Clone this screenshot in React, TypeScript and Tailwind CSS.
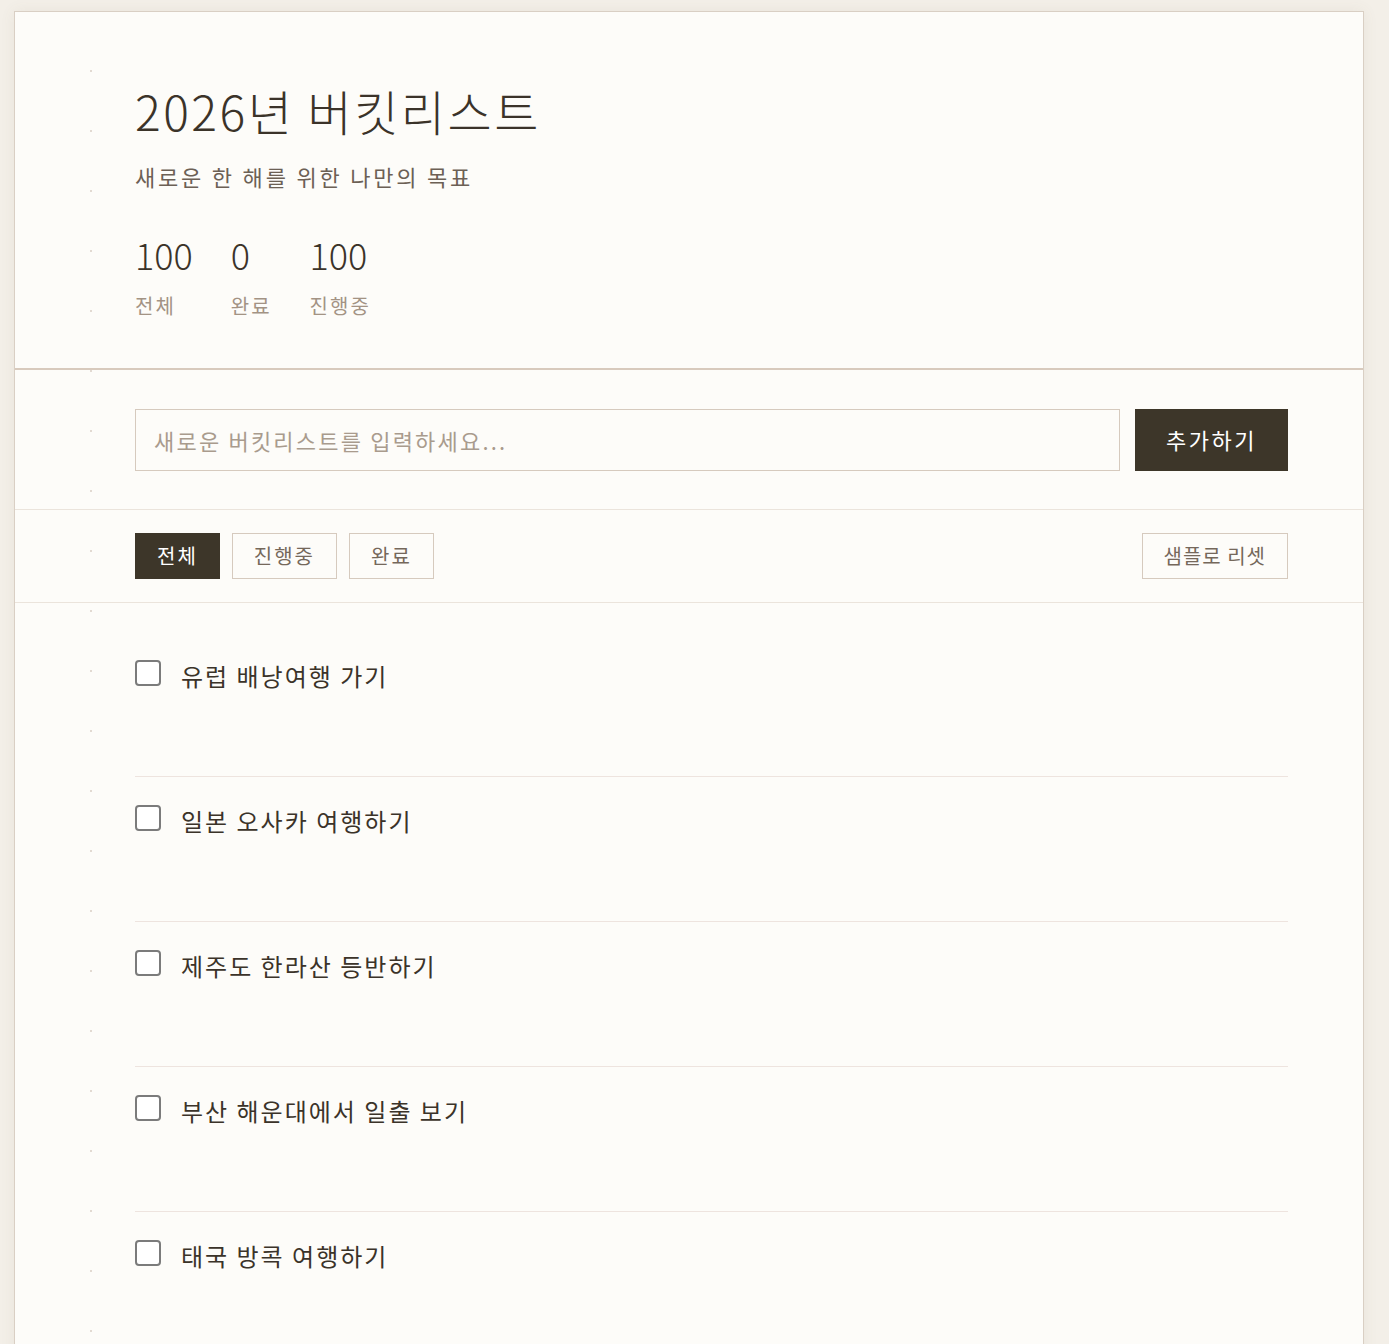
import { useState } from 'react';

type Item = {
	id: number;
	text: string;
	done: boolean;
};

const SAMPLE: Item[] = [
	'유럽 배낭여행 가기',
	'일본 오사카 여행하기',
	'제주도 한라산 등반하기',
	'부산 해운대에서 일출 보기',
	'태국 방콕 여행하기',
	'스카이다이빙 도전하기',
	'마라톤 완주하기',
].map((text, i) => ({ id: i + 1, text, done: false }));

type Filter = 'all' | 'active' | 'done';

const FILTERS: { key: Filter; label: string }[] = [
	{ key: 'all', label: '전체' },
	{ key: 'active', label: '진행중' },
	{ key: 'done', label: '완료' },
];

const App = () => {
	const [items, setItems] = useState<Item[]>(SAMPLE);
	const [filter, setFilter] = useState<Filter>('all');
	const [draft, setDraft] = useState('');

	const total = 100;
	const doneCount = items.filter((item) => item.done).length;

	const visible = items.filter((item) =>
		filter === 'all' ? true : filter === 'done' ? item.done : !item.done,
	);

	const addItem = () => {
		if (!draft.trim()) return;
		setItems([...items, { id: Date.now(), text: draft.trim(), done: false }]);
		setDraft('');
	};

	return (
		<div className="min-h-screen bg-[#f3efe8] pl-[14px] pt-[11px] font-['Noto_Sans_CJK_KR','Noto_Sans',sans-serif] text-[#3b3329]">
			<div className="relative w-[1350px] border border-[#d9cfc4] bg-[#fdfcf9] shadow-[0_0_14px_rgba(120,100,80,0.08)]">
				{/* notebook margin dots */}
				<div className="pointer-events-none absolute top-0 bottom-0 left-[75px] w-[2px] bg-[linear-gradient(#e2dad2_2px,transparent_2px)] bg-[length:2px_60px] bg-[position:0_58px]" />

				<header className="border-b-2 border-[#d8cabd] pt-[70px] pr-[75px] pb-[49px] pl-[120px]">
					<h1 className="text-[48px] leading-[1.2] font-light tracking-[2.5px]">2026년 버킷리스트</h1>
					<p className="mt-5 text-[22px] leading-[1.5] tracking-[2.8px] text-[#6c6055]">
						새로운 한 해를 위한 나만의 목표
					</p>
					<div className="mt-10 flex gap-[38px]">
						{[
							{ value: total, label: '전체' },
							{ value: doneCount, label: '완료' },
							{ value: total - doneCount, label: '진행중' },
						].map((stat) => (
							<div key={stat.label} className="flex flex-col">
								<span className="text-[36px] leading-[1.2] font-light">{stat.value}</span>
								<span className="mt-4 text-[20px] leading-[27px] tracking-[2px] text-[#a39384]">{stat.label}</span>
							</div>
						))}
					</div>
				</header>

				<div className="flex gap-[15px] border-b border-[#ebe4dc] pt-[39px] pr-[75px] pb-[38px] pl-[120px]">
					<input
						value={draft}
						onChange={(e) => setDraft(e.target.value)}
						onKeyDown={(e) => e.key === 'Enter' && addItem()}
						placeholder="새로운 버킷리스트를 입력하세요..."
						className="h-[62px] flex-1 border border-[#d6cabe] bg-transparent pr-5 pl-[18px] text-[22px] tracking-[2.2px] outline-none placeholder:text-[#a99b8d]"
					/>
					<button
						onClick={addItem}
						className="h-[62px] w-[153px] bg-[#3d3629] text-[22px] tracking-[2.5px] text-white">
						추가하기
					</button>
				</div>

				<div className="flex items-center justify-between border-b border-[#ebe4dc] pt-[23px] pr-[75px] pb-[23px] pl-[120px]">
					<div className="flex gap-3">
						{FILTERS.map((f) => (
							<button
								key={f.key}
								onClick={() => setFilter(f.key)}
								className={
									filter === f.key
										? 'h-[46px] border border-[#3d3629] bg-[#3d3629] px-[21px] text-[20px] tracking-[2px] text-white'
										: 'h-[46px] border border-[#d6cabe] px-[21px] text-[20px] tracking-[2px] text-[#75685b]'
								}>
								{f.label}
							</button>
						))}
					</div>
					<button
						onClick={() => setItems(SAMPLE)}
						className="h-[46px] border border-[#d6cabe] px-[21px] text-[20px] tracking-[1px] text-[#75685b]">
						샘플로 리셋
					</button>
				</div>

				<ul className="pt-[29px] pr-[75px] pl-[120px]">
					{visible.map((item) => (
						<li key={item.id} className="flex h-[145px] items-start gap-5 border-b border-[#eee4df] pt-[28px]">
							<input
								type="checkbox"
								checked={item.done}
								onChange={() =>
									setItems(items.map((it) => (it.id === item.id ? { ...it, done: !it.done } : it)))
								}
								className="h-[26px] w-[26px] shrink-0 cursor-pointer appearance-none rounded-[4px] border-2 border-[#7b7b7b] bg-white checked:bg-[#3d3629]"
							/>
							<span className="text-[24px] leading-[32px] tracking-[2px]">{item.text}</span>
						</li>
					))}
				</ul>
			</div>
		</div>
	);
};

export default App;
